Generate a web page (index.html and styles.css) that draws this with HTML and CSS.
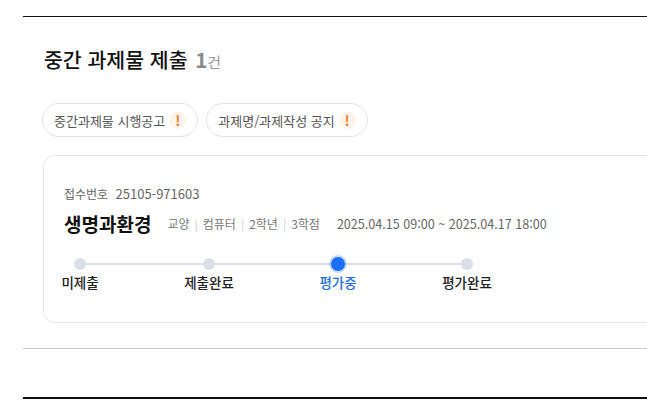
FILE: index.html
```html
<!DOCTYPE html>
<html lang="ko">
<head>
  <meta charset="UTF-8">
  <meta name="viewport" content="width=device-width, initial-scale=1.0">
  <title>중간 과제물 제출</title>
  <link rel="stylesheet" href="styles.css">
</head>
<body>
  <div class="wrap">
    <section class="section">
      <h2 class="title">중간 과제물 제출 <span class="count">1</span><span class="unit">건</span></h2>
      <div class="notices">
        <button class="chip">중간과제물 시행공고 <span class="alert">!</span></button>
        <button class="chip">과제명/과제작성 공지 <span class="alert">!</span></button>
      </div>
      <div class="card">
        <p class="receipt">접수번호 <span class="receipt-no">25105-971603</span></p>
        <div class="subject">
          <strong class="subject-name">생명과환경</strong>
          <ul class="meta">
            <li>교양</li>
            <li>컴퓨터</li>
            <li>2학년</li>
            <li>3학점</li>
          </ul>
          <span class="period">2025.04.15 09:00 ~ 2025.04.17 18:00</span>
        </div>
        <ol class="steps">
          <li class="step"><span class="dot"></span><span class="label">미제출</span></li>
          <li class="step"><span class="dot"></span><span class="label">제출완료</span></li>
          <li class="step is-active"><span class="dot"></span><span class="label">평가중</span></li>
          <li class="step"><span class="dot"></span><span class="label">평가완료</span></li>
        </ol>
      </div>
    </section>
    <section class="section-empty"></section>
    <div class="section-end"></div>
  </div>
</body>
</html>
```

FILE: styles.css
```css
:root {
  --text-dark: #111;
  --text-gray: #666;
  --line: #e4e4e4;
  --step-gray: #dcdfe8;
  --primary-blue: #1a6ef5;
  --alert-orange: #f57f2a;
}
body {
  margin: 0;
  overflow: hidden;
  font-family: "Noto Sans CJK KR", "Noto Sans", sans-serif;
  color: var(--text-dark);
  background: #fff;
}
.wrap {
  margin: 16px 0 0 23px;
  width: 720px;
}
.section {
  border-top: 1px solid #111;
  padding: 28px 0 25px 20px;
  border-bottom: 1px solid #c8c8c8;
}
.title {
  margin: 0 0 0 1px;
  font-size: 20.5px;
  font-weight: 500;
  line-height: 28px;
}
.title .count { color: #8a8a8a; font-weight: 700; margin-left: 2px; }
.title .unit { color: #9a9a9a; font-size: 15px; font-weight: 400; }

.notices { display: flex; gap: 8px; margin-top: 27px; margin-left: -1px; }
.chip {
  display: flex;
  align-items: center;
  gap: 4px;
  height: 34px;
  padding: 0 11px 0 11px;
  border: 1px solid var(--line);
  border-radius: 17px;
  background: #fff;
  font-family: inherit;
  font-size: 13px;
  color: #555;
}
.alert {
  display: inline-flex;
  align-items: center;
  justify-content: center;
  width: 17px;
  height: 17px;
  border-radius: 50%;
  background: #fff3ea;
  color: var(--alert-orange);
  font-weight: 700;
  font-size: 14px;
}

.card {
  margin-top: 18px;
  height: 168px;
  box-sizing: border-box;
  padding: 29px 20px 0 20px;
  border: 1px solid var(--line);
  border-radius: 12px;
}
.receipt { margin: 0; font-size: 12px; line-height: 18px; color: var(--text-gray); }
.receipt-no { margin-left: 4px; font-size: 13px; }

.subject { display: flex; align-items: center; margin-top: 8px; height: 24px; }
.subject-name { font-size: 19px; font-weight: 700; }
.meta {
  display: flex;
  list-style: none;
  margin: 0 0 0 16px;
  padding: 0;
  font-size: 12px;
  color: #777;
}
.meta li + li::before { content: "|"; color: #cfcfcf; margin: 0 5px; }
.period { margin-left: 17px; font-size: 12.6px; color: var(--text-gray); }

.steps {
  display: flex;
  gap: 93px;
  list-style: none;
  margin: 21px 0 0 -2px;
  padding: 0;
}
.step {
  position: relative;
  width: 36px;
  display: flex;
  flex-direction: column;
  align-items: center;
}
.step:not(:last-child)::after {
  content: "";
  position: absolute;
  top: 7px;
  left: 18px;
  width: 129px;
  height: 2px;
  background: var(--step-gray);
}
.dot {
  position: relative;
  z-index: 1;
  width: 12px;
  height: 12px;
  margin: 2px 0;
  border-radius: 50%;
  background: var(--step-gray);
}
.label {
  margin-top: 0;
  white-space: nowrap;
  font-size: 13.5px;
  font-weight: 500;
  color: #222;
}
.is-active .dot {
  width: 14px;
  height: 14px;
  margin: 1px 0;
  background: var(--primary-blue);
  box-shadow: 0 0 0 2px rgba(26, 110, 245, 0.25);
}
.is-active .label { color: var(--primary-blue); }

.section-empty { height: 48px; }
.section-end { border-top: 2px solid #111; }
```
